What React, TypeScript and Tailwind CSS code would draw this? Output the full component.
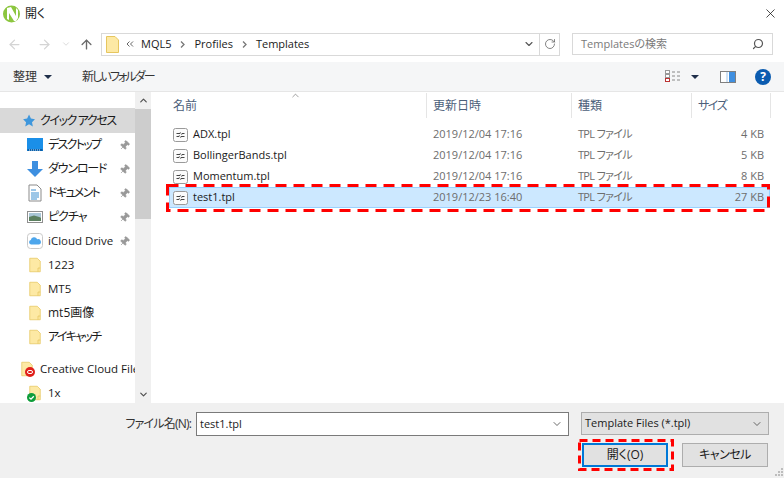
import { ArrowLeft, ArrowRight, ArrowUp, ChevronDown, ChevronUp, RotateCw, Search, Pin, X } from "lucide-react";

const font = { fontFamily: '"Open Sans", "Noto Sans CJK JP", sans-serif' };

const FolderIcon = ({ size = 16 }: { size?: number }) => (
  <svg width={size} height={size + 4} viewBox="0 0 16 20" className="shrink-0">
    <path d="M1 1 H11 L15 5 V19 H1 Z" fill="#fde9a4" stroke="#e6c65f" />
    <path d="M12 19 V14 H15" fill="none" stroke="#e6c65f" />
  </svg>
);

const TplIcon = () => (
  <svg width="16" height="14" viewBox="0 0 16 14" className="shrink-0">
    <rect x="0.5" y="0.5" width="14" height="13" rx="2" fill="#fbfbfb" stroke="#9a9a9a" />
    <path d="M3.5 5.5 H7 M9 5.5 H11.5 M3.5 8.5 H6 M8 8.5 H11.5" stroke="#444" strokeWidth="1" />
    <path d="M7 4 L9 7 M6 7 L8 10" stroke="#666" strokeWidth="0.8" />
  </svg>
);

const SideIcon = ({ name }: { name: string }) => {
  if (name === "desktop")
    return (
      <svg width="16" height="14" viewBox="0 0 16 14">
        <rect width="16" height="13" fill="#1a8fe8" />
        <rect x="0.5" y="11" width="15" height="2" fill="#0b5fa8" />
        <path d="M2 12 H13" stroke="#cfe8fb" strokeDasharray="1 1" />
      </svg>
    );
  if (name === "download")
    return (
      <svg width="16" height="16" viewBox="0 0 16 16">
        <path d="M5 0 H11 V8 H16 L8 16 L0 8 H5 Z" fill="#3d8fe0" />
      </svg>
    );
  if (name === "doc")
    return (
      <svg width="14" height="18" viewBox="0 0 14 18">
        <path d="M1 1 H9 L13 5 V17 H1 Z" fill="#fff" stroke="#8b8b8b" />
        <path d="M3 6 H8 M3 9 H11 M3 11 H11 M3 13 H11 M3 15 H9" stroke="#3c8fd0" />
      </svg>
    );
  if (name === "pic")
    return (
      <svg width="16" height="12" viewBox="0 0 16 12">
        <rect x="0.5" y="0.5" width="15" height="11" fill="#fff" stroke="#8f8f8f" />
        <rect x="2" y="2" width="12" height="4" fill="#a9c6d6" />
        <path d="M2 6 L7 4.5 L14 6.5 V10 H2 Z" fill="#5c8060" />
      </svg>
    );
  if (name === "icloud")
    return (
      <svg width="16" height="16" viewBox="0 0 16 16">
        <rect x="0.5" y="0.5" width="15" height="15" rx="3" fill="#fff" stroke="#c9c9c9" />
        <path d="M4 11.5 A2.3 2.3 0 0 1 3.8 7 A3.4 3.4 0 0 1 10.2 6.2 A2.7 2.7 0 0 1 12 11.5 Z" fill="#4da6ec" />
      </svg>
    );
  return <FolderIcon size={12} />;
};

const quick = [
  { label: "デスクトップ", icon: "desktop", pin: true, cls: "tracking-[-1.7px]" },
  { label: "ダウンロード", icon: "download", pin: true, cls: "tracking-[-1.2px]" },
  { label: "ドキュメント", icon: "doc", pin: true, cls: "tracking-[-1.7px]" },
  { label: "ピクチャ", icon: "pic", pin: true, cls: "tracking-[-1px]" },
  { label: "iCloud Drive", icon: "icloud", pin: true, cls: "text-[11.5px]" },
  { label: "1223", icon: "folder", pin: false, cls: "text-[11.5px]" },
  { label: "MT5", icon: "folder", pin: false, cls: "text-[11.5px]" },
  { label: "mt5画像", icon: "folder", pin: false, cls: "" },
  { label: "アイキャッチ", icon: "folder", pin: false, cls: "tracking-[-1.7px]" },
];

const files = [
  { name: "ADX.tpl", date: "2019/12/04 17:16", size: "4 KB" },
  { name: "BollingerBands.tpl", date: "2019/12/04 17:16", size: "5 KB" },
  { name: "Momentum.tpl", date: "2019/12/04 17:16", size: "8 KB" },
  { name: "test1.tpl", date: "2019/12/23 16:40", size: "27 KB", selected: true },
];

export default function App() {
  return (
    <div style={font} className="relative flex h-[478px] w-[784px] flex-col overflow-hidden bg-white text-[11px] text-[#1a1a1a] [font-feature-settings:'palt']">
      {/* title bar */}
      <div className="flex h-[27px] shrink-0 items-center pl-[3px] pr-[5px]">
        <svg width="17" height="18" viewBox="0 0 17 18" className="shrink-0">
          <circle cx="8.5" cy="9" r="8.5" fill="#8cc63f" />
          <path d="M4 3 L8 2 L13 11 V3 L15 5 V13 L13 16 H11 L6 8 V15 L4 14 Z" fill="#fff" />
        </svg>
        <span className="ml-[5px] text-[12px]">開く</span>
        <X size={15} strokeWidth={1.2} className="ml-auto mr-[1px] text-[#111]" />
      </div>

      {/* nav bar */}
      <div className="flex h-[35px] shrink-0 items-center pb-[1px]">
        <ArrowLeft size={15} strokeWidth={2} className="ml-[7px] text-[#d4d4d4]" />
        <ArrowRight size={15} strokeWidth={2} className="ml-[15px] text-[#d4d4d4]" />
        <ChevronDown size={10} strokeWidth={2} className="ml-[9px] text-[#d4d4d4]" />
        <ArrowUp size={15} strokeWidth={2.2} className="ml-[8px] text-[#6b6b6b]" />
        <div className="ml-[7px] flex h-[23px] w-[459px] items-center border border-[#d9d9d9]">
          <svg width="13" height="17" viewBox="0 0 13 17" className="ml-[4px] shrink-0">
            <path d="M0.5 0.5 H9 L12.5 4 V16.5 H0.5 Z" fill="#fde9a4" stroke="#e6c65f" />
          </svg>
          <svg width="8" height="6" viewBox="0 0 8 6" className="ml-[7px] shrink-0">
            <path d="M3.5 0.5 L1 3 L3.5 5.5 M7 0.5 L4.5 3 L7 5.5" fill="none" stroke="#666" />
          </svg>
          <span className="ml-[7px]">MQL5</span>
          <svg width="5" height="7" viewBox="0 0 5 7" className="ml-[9px] shrink-0">
            <path d="M1 0.5 L4 3.5 L1 6.5" fill="none" stroke="#777" strokeWidth="1.3" />
          </svg>
          <span className="ml-[9px]">Profiles</span>
          <svg width="5" height="7" viewBox="0 0 5 7" className="ml-[9px] shrink-0">
            <path d="M1 0.5 L4 3.5 L1 6.5" fill="none" stroke="#777" strokeWidth="1.3" />
          </svg>
          <span className="ml-[9px]">Templates</span>
          <div className="ml-auto flex h-full items-center">
            <ChevronDown size={12} strokeWidth={2.2} className="mr-[4px] text-[#555]" />
            <div className="flex h-full w-[20px] items-center justify-center border-l border-[#d9d9d9]">
              <RotateCw size={12} strokeWidth={1.6} className="text-[#666]" />
            </div>
          </div>
        </div>
        <div className="ml-[12px] flex h-[22px] w-[201px] items-center justify-between border border-[#d9d9d9] pl-[8px] pr-[8px] text-[#7a7a7a]">
          <span>Templatesの検索</span>
          <Search size={12} strokeWidth={2.4} className="-scale-x-100 text-[#555]" />
        </div>
      </div>

      {/* toolbar */}
      <div className="flex h-[30px] shrink-0 items-center border-b border-[#e6e6e6] bg-[#f5f6f7] pl-[13px] text-[12px] text-[#333]">
        <span>整理</span>
        <span className="ml-[7px] h-0 w-0 border-x-[4px] border-t-[4px] border-x-transparent border-t-[#1f2f4a]" />
        <span className="ml-[30px] tracking-[-1.9px]">新しいフォルダー</span>
        <div className="ml-auto flex items-center pr-[13px]">
          <svg width="16" height="13" viewBox="0 0 16 13">
            <rect x="0.5" y="0.5" width="4" height="3" fill="#fff" stroke="#999" />
            <rect x="0.5" y="4.5" width="4" height="3" fill="#fff" stroke="#999" />
            <rect x="0.5" y="8.5" width="4" height="3" fill="#fff" stroke="#b33" />
            <path d="M7 2 H10 M12 2 H15 M7 6 H10 M12 6 H15 M7 10 H10 M12 10 H15" stroke="#888" />
          </svg>
          <span className="ml-[10px] h-0 w-0 border-x-[4px] border-t-[4px] border-x-transparent border-t-[#1f2f4a]" />
          <svg width="16" height="12" viewBox="0 0 16 12" className="ml-[21px]">
            <rect x="0.5" y="0.5" width="15" height="11" fill="#fff" stroke="#808080" />
            <rect x="9" y="1" width="6" height="10" fill="#3f8fe0" />
            <path d="M7 1 V11" stroke="#a0c4e8" />
          </svg>
          <span className="ml-[19px] flex h-[16px] w-[16px] items-center justify-center rounded-full bg-[#0b5cb0] text-[12px] font-bold text-white">?</span>
        </div>
      </div>

      {/* main */}
      <div className="flex min-h-0 flex-1">
        <div className="w-[135px] shrink-0 overflow-hidden pt-[16px] whitespace-nowrap text-[12px]">
          <div className="flex h-[25px] items-center bg-[#d9d9d9] pl-[22px]">
            <svg width="13" height="13" viewBox="0 0 24 24" className="shrink-0">
              <path d="M13 1 L16.5 8.5 L24 9.5 L18.5 15 L20 23 L13 19 L6 23 L7.5 15 L2 9.5 L9.5 8.5 Z" fill="#3f97dc" />
            </svg>
            <span className="ml-[5px] tracking-[-1.4px]">クイック アクセス</span>
          </div>
          {quick.map((q) => (
            <div key={q.label} className="flex h-[24px] items-center">
              <div className="ml-[27px] flex w-[16px] shrink-0 justify-center">
                <SideIcon name={q.icon} />
              </div>
              <span className={`ml-[5px] ${q.cls}`}>{q.label}</span>
              {q.pin && <Pin size={11} strokeWidth={1.5} className="ml-auto mr-[5px] rotate-45 fill-[#999] text-[#999]" />}
            </div>
          ))}
          <div className="mt-[8px] flex h-[24px] items-center pl-[21px] text-[11.5px]">
            <div className="relative shrink-0">
              <FolderIcon size={12} />
              <span className="absolute bottom-[0px] left-[4px] flex h-[10px] w-[10px] items-center justify-center rounded-full bg-[#e0201b]">
                <span className="h-[4px] w-[6px] rounded-full border border-white" />
              </span>
            </div>
            <span className="ml-[7px]">Creative Cloud Files</span>
          </div>
          <div className="flex h-[24px] items-center pl-[29px] text-[11.5px]">
            <div className="relative shrink-0">
              <FolderIcon size={12} />
              <svg width="9" height="9" viewBox="0 0 9 9" className="absolute bottom-[-1px] left-[-2px]">
                <circle cx="4.5" cy="4.5" r="4.5" fill="#0f9d3a" />
                <path d="M2.3 4.6 L4 6.2 L6.8 3.2" fill="none" stroke="#fff" strokeWidth="1.3" />
              </svg>
            </div>
            <span className="ml-[7px]">1x</span>
          </div>
        </div>

        <div className="flex w-[16px] shrink-0 flex-col bg-[#f0f0f0]">
          <div className="flex h-[17px] items-center justify-center">
            <ChevronUp size={11} strokeWidth={2.6} className="text-[#505050]" />
          </div>
          <div className="h-[110px] bg-[#cdcdcd]" />
          <div className="flex flex-1 items-end justify-center pb-[3px]">
            <ChevronDown size={11} strokeWidth={2.6} className="text-[#505050]" />
          </div>
        </div>

        <div className="relative min-w-0 flex-1 pl-[18px]">
          <ChevronUp size={11} strokeWidth={1.2} className="absolute left-[139px] top-[-2px] text-[#555]" />
          <div className="flex h-[26px] items-center pt-[1px] text-[12px] text-[#4c607a]">
            <span className="ml-[4px] w-[253px]">名前</span>
            <span className="flex h-full w-[145px] items-center border-l border-[#e5e5e5] pl-[6px]">更新日時</span>
            <span className="flex h-full w-[120px] items-center border-l border-[#e5e5e5] pl-[6px]">種類</span>
            <span className="flex h-full w-[80px] items-center border-l border-r border-[#e5e5e5] pl-[6px] tracking-[-1.5px]">サイズ</span>
          </div>
          <div className="mt-[6px] text-[#6d6d6d]">
            {files.map((f) => (
              <div key={f.name} className={`flex h-[21px] w-[601px] items-center ${f.selected ? "border border-[#99d1ff] bg-[#cce8ff]" : "border border-transparent"}`}>
                <div className="ml-[3px] flex w-[254px] items-center">
                  <TplIcon />
                  <span className="ml-[4px] text-[#1a1a1a]">{f.name}</span>
                </div>
                <span className="w-[145px] pl-[6px]">{f.date}</span>
                <span className="w-[100px] pl-[6px] tracking-[-0.7px]">TPL ファイル</span>
                <span className="w-[92px] text-right">{f.size}</span>
              </div>
            ))}
          </div>
        </div>
      </div>

      {/* bottom panel */}
      <div className="relative flex h-[75px] shrink-0 flex-col bg-[#f0f0f0] pt-[9px]">
        <div className="flex items-start">
          <span className="flex h-[24px] w-[191px] items-center justify-end text-[12px] tracking-[-0.8px] text-[#333]">ファイル名(N):</span>
          <div className="ml-[5px] flex h-[24px] w-[373px] items-center justify-between border border-[#7a7a7a] bg-white pl-[3px] pr-[5px]">
            <span>test1.tpl</span>
            <ChevronDown size={12} strokeWidth={1.6} className="text-[#444]" />
          </div>
          <div className="ml-[12px] flex h-[23px] w-[188px] items-center justify-between border border-[#adadad] bg-[#e1e1e1] pl-[3px] pr-[5px]">
            <span>Template Files (*.tpl)</span>
            <ChevronDown size={12} strokeWidth={1.6} className="text-[#444]" />
          </div>
        </div>
        <div className="mt-[7px] flex items-center text-[12px]">
          <button className="ml-[582px] h-[24px] w-[86px] border-2 border-[#0078d7] bg-[#e1e1e1]">開く(O)</button>
          <button className="ml-[14px] h-[24px] w-[86px] border border-[#adadad] bg-[#e1e1e1] tracking-[-0.5px]">キャンセル</button>
        </div>
        <svg width="12" height="12" viewBox="0 0 12 12" className="absolute bottom-0 right-0">
          <path d="M9 2 h2 v2 h-2 Z M6 5 h2 v2 h-2 Z M9 5 h2 v2 h-2 Z M3 8 h2 v2 h-2 Z M6 8 h2 v2 h-2 Z M9 8 h2 v2 h-2 Z" fill="#bdbdbd" />
        </svg>
      </div>

      {/* red highlights */}
      <svg width="604" height="28" viewBox="0 0 604 28" className="absolute left-[166px] top-[184px]">
        <rect x="1.5" y="1.5" width="601" height="25" fill="none" stroke="#ff0000" strokeWidth="3" strokeDasharray="11 7" />
      </svg>
      <svg width="96" height="32" viewBox="0 0 96 32" className="absolute left-[578px] top-[439px]">
        <rect x="1.5" y="1.5" width="93" height="29" fill="none" stroke="#ff0000" strokeWidth="3" strokeDasharray="8 5" />
      </svg>
    </div>
  );
}
